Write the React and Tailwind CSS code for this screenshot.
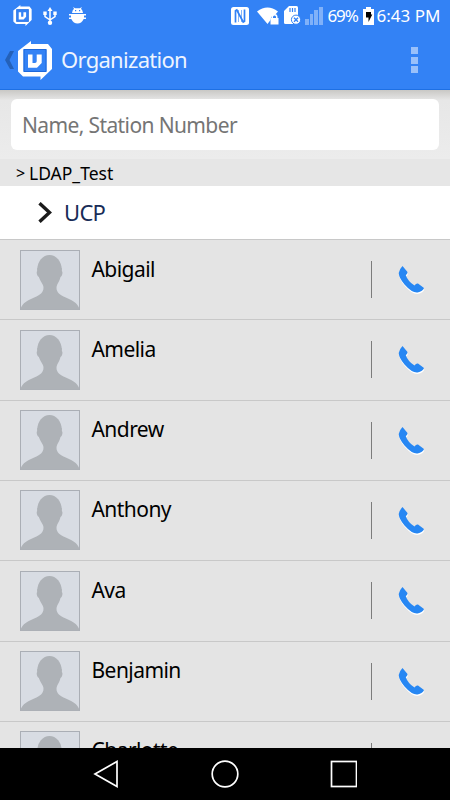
import React from 'react'

const contacts = ['Abigail', 'Amelia', 'Andrew', 'Anthony', 'Ava', 'Benjamin', 'Charlotte']

const Logo = ({ className }) => (
  <svg viewBox="0 0 34 39" className={className}>
    <path fill="white" fillRule="evenodd" d="M13 0v3h17l4 5v20L22.500 39v-3.500H5l-5-5V10zM5.500 8v23h23V8z" />
    <path fill="none" stroke="#1d68dc" d="M6 8.500h22v22H6z" />
    <path fill="white" d="M10 13.500h4.500v8.500h2.500q1.700 0 1.700-1.800V13.500h5v8.500l-4.700 4.700H10z" />
  </svg>
)

const Avatar = () => (
  <svg viewBox="0 0 60 60" className="size-[60px] shrink-0">
    <rect x=".5" y=".5" width="59" height="59" fill="#d8dce3" stroke="#aaaeb5" />
    <ellipse cx="29.500" cy="19.500" rx="12.200" ry="14.500" fill="#aeb2b7" />
    <path
      fill="#aeb2b7"
      d="M17.300 18H41.700V21C43.200 21.500 42.300 26.500 40.500 27C39.700 31 37.500 33.500 36.700 36C35.700 41 38.500 44 43.500 46.500C51 49.500 58.500 53 59.500 59.500H.5C1.500 53 9 49.500 16.500 46.500C21.500 44 24.300 41 23.300 36C22.500 33.500 20 31 19 27C17 26.500 16 21.500 17.300 21Z"
    />
  </svg>
)

const Phone = () => (
  <svg viewBox="0 0 28 30" className="ml-[26px] h-[30px] w-7">
    <path transform="translate(.3 1.400)" fill="white" d="M4.500 1L9.500 7Q9.800 8.500 7.800 10.200Q10 16.500 16.500 20.500Q18.200 18 20 18.500L26 23Q25 26 19.500 27.500Q14 28 6.500 19.500Q1 13 .7 8Q1.500 4 4.500 1Z" />
    <path fill="#2787f3" d="M4.500 1L9.500 7Q9.800 8.500 7.800 10.200Q10 16.500 16.500 20.500Q18.200 18 20 18.500L26 23Q25 26 19.500 27.500Q14 28 6.500 19.500Q1 13 .7 8Q1.500 4 4.500 1Z" />
  </svg>
)

const StatusBar = () => (
  <div className="flex h-[31px] items-center pl-[13px] text-white">
    <Logo className="h-[21px] w-[19px] shrink-0" />
    <svg viewBox="0 0 14 18" className="ml-[11px] h-[18px] w-[14px] shrink-0" fill="none" stroke="white" strokeWidth="1.500">
      <path d="M7 2v14M2 6v3.500L7 13M12 6v3.500L7 13" />
      <path fill="white" stroke="none" d="M7 0l2.500 4h-5zM.3 4.500h3.400v3.500H.3zM10.300 4.500h3.400v3.500h-3.400z" />
      <circle cx="7" cy="15.700" r="2.200" fill="white" stroke="none" />
    </svg>
    <svg viewBox="0 0 17 17" className="ml-3 h-[17px] w-[17px] shrink-0" fill="white">
      <path d="M3 6Q3.300 3 5 1.800L4 0L6.200 1.200H10.800L13 0L12 1.800Q13.700 3 14 6zM0 7h17v1.500H0zM2 8.500h13v2h2V12h-2.300Q12.500 16.500 8.500 16.500T2.300 12H0v-1.500h2z" />
      <path fill="#3382f5" d="M6 3h1.200v1.200H6zM10 3h1.200v1.200H10z" />
    </svg>

    <svg viewBox="0 0 18 18" className="ml-[145px] h-[18px] w-[18px] shrink-0">
      <rect width="18" height="18" rx="2.500" fill="white" />
      <path d="M4.500 15.500V3.800L5.800 3L12.200 15L13.500 14.200V2.500" fill="none" stroke="#3382f5" strokeWidth="1.700" />
      <path d="M7.500 3v12M10.500 3v12" fill="none" stroke="#3382f5" strokeWidth=".6" />
    </svg>
    <svg viewBox="0 0 22 18" className="ml-2 h-[18px] w-[22px] shrink-0">
      <path fill="white" d="M0 4.500Q10.500-3.500 21 4.500L18 8Q14 8 13.500 13L10.500 17z" />
      <path fill="white" d="M13.500 11h1V10a3 3 0 0 1 6 0v1h1v6.500h-8z" />
      <path fill="#3382f5" d="M16 11h3V10a1.500 1.500 0 0 0-3 0z" />
    </svg>
    <svg viewBox="0 0 17 19" className="ml-[5px] h-[19px] w-[17px] shrink-0">
      <path fill="white" d="M5 0h7.500q1.500 0 1.500 1.500V18H1.500Q0 18 0 16.500V5z" />
      <path stroke="#3382f5" strokeWidth="1.200" d="M6 2v4M8.500 2v4M11 2v4" />
      <circle cx="12" cy="13.700" r="4.600" fill="white" stroke="#3382f5" />
      <path stroke="#3382f5" strokeWidth="1.400" d="M10 11.700l4 4M14 11.700l-4 4" />
    </svg>
    <div className="ml-1 flex h-[18px] items-end gap-px">
      <i className="h-[6px] w-[3.500px] bg-[#80b1f9]" />
      <i className="h-[11px] w-[3.500px] bg-[#80b1f9]" />
      <i className="h-[15px] w-[3.500px] bg-[#80b1f9]" />
      <i className="h-[18px] w-[4px] bg-[#80b1f9]" />
    </div>
    <span className="ml-[5px] w-[35px] text-[17px] tracking-[-1.1px]">69%</span>
    <svg viewBox="0 0 11 18" className="h-[18px] w-[11px] shrink-0">
      <path fill="white" d="M3 0h5v2h3v16H0V2h3z" />
      <path fill="black" d="M3 5h5v2.500h1.300L5.500 15V10.500H3z" />
    </svg>
    <span className="ml-[3px] whitespace-nowrap text-[17px] tracking-[0px]">6:43 PM</span>
  </div>
)

const ContactRow = ({ name }) => (
  <div className="flex h-[80.33px] shrink-0 border-t border-[#c8c8c8] pl-5 pt-[9.500px]">
    <Avatar />
    <span className="ml-[11.500px] h-9 w-[279.500px] text-[21px] leading-[38px] tracking-[-0.55px] text-black">{name}</span>
    <div className="mt-[11.500px] h-[37px] w-px bg-[#7c7c7c]" />
    <div className="mt-[15.500px]">
      <Phone />
    </div>
  </div>
)

const App = () => {
  return (
    <div className="flex h-[800px] w-[450px] flex-col overflow-hidden bg-[#e4e4e4] font-['Noto_Sans',sans-serif]">
      <div className="h-[90px] shrink-0 border-b border-[#1e70e4] bg-[#3382f5]">
        <StatusBar />
        <div className="flex h-[58px] items-center pl-[5px]">
          <svg viewBox="0 0 9 18" className="h-[18px] w-[9px]">
            <path fill="#2461b9" d="M5 0h4L4.500 9L9 18H5L0 9z" />
          </svg>
          <Logo className="ml-1 h-[39px] w-[34px] shrink-0" />
          <span className="-mt-0.5 ml-[9px] w-[350px] text-[22px] leading-none tracking-[-0.7px] text-[#eef4fe]">Organization</span>
          <div className="flex flex-col gap-[2.500px]">
            <i className="size-[7px] bg-[#99c0fa]" />
            <i className="size-[7px] bg-[#99c0fa]" />
            <i className="size-[7px] bg-[#99c0fa]" />
          </div>
        </div>
      </div>

      {/* Search */}
      <div className="h-[69px] shrink-0 bg-linear-to-b from-[#c9c8c5] via-[#e7e7e7] via-15% to-[#ececec] px-[11px] pt-[9px]">
        <div className="flex h-[51px] w-[428px] items-center rounded-md bg-white pt-0.5 pl-[11px] text-[21px] tracking-[-0.62px] text-[#757575]">
          Name, Station Number
        </div>
      </div>

      <div className="flex h-[27px] shrink-0 items-center bg-[#e6e6e6] pt-px pl-4 text-[17.500px] text-black">
        <span className="w-[13px] text-base">&gt;</span>
        <span>LDAP_Test</span>
      </div>

      <div className="flex h-[53px] shrink-0 items-center bg-white pl-[38px] text-[22px] text-[#182c57]">
        <svg viewBox="0 0 14 21" className="h-[21px] w-[14px]" fill="none" stroke="#1b1b1b" strokeWidth="3.400">
          <path d="M1.500 1.200L11.500 10.500L1.500 19.800" />
        </svg>
        <span className="ml-3 tracking-[-0.7px]">UCP</span>
      </div>

      {/* Contacts */}
      <div className="flex h-[509px] shrink-0 flex-col overflow-hidden">
        {contacts.map((name) => (
          <ContactRow key={name} name={name} />
        ))}
      </div>

      <div className="flex h-[52px] shrink-0 items-center justify-center bg-black">
        <svg viewBox="0 0 264 28" className="h-7 w-[264px]" fill="none" stroke="white" strokeWidth="1.700">
          <path d="M2 14L24 1.500V26.500Z" />
          <circle cx="132" cy="14" r="12.800" />
          <rect x="238.500" y="1.500" width="25" height="25" />
        </svg>
      </div>
    </div>
  )
}

export default App
